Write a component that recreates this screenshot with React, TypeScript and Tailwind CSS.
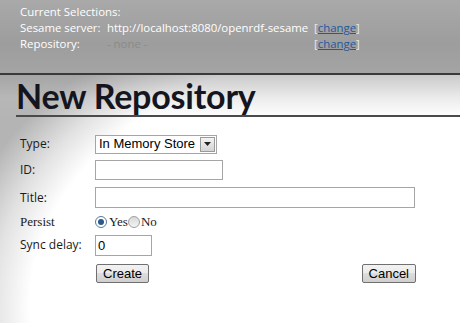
import React from "react";

const sans = { fontFamily: '"Open Sans", "DejaVu Sans", sans-serif' };

export default function App() {
  return (
    <div className="w-[460px] h-[323px] overflow-hidden bg-white" style={sans}>
      {/* header */}
      <div className="h-[73px] bg-[linear-gradient(180deg,#a9a9a9_0%,#9d9d9d_60%,#a4a4a4_100%)] pl-[20px] pt-[4px] text-[11.4px] leading-[16px] text-white">
        <div>Current Selections:</div>
        <div className="flex">
          <span className="w-[87px]">Sesame server:</span>
          <span className="w-[207px]">http://localhost:8080/openrdf-sesame</span>
          <span className="text-[#e8e8e8]">
            [<a className="text-[#1e5a9c] underline">change</a>]
          </span>
        </div>
        <div className="flex">
          <span className="w-[87px]">Repository:</span>
          <span className="w-[207px] text-[#8a8a8a]">- none -</span>
          <span className="text-[#e8e8e8]">
            [<a className="text-[#1e5a9c] underline">change</a>]
          </span>
        </div>
      </div>
      <div className="h-[2px] bg-[#3a3a3a]" />
      {/* lower area */}
      <div className="h-[248px] bg-[radial-gradient(ellipse_480px_340px_at_400px_230px,#ffffff_0%,#ffffff_77%,#e2e2e2_85%,#b4b4b4_95%)]">
        <div className="h-[42px] pl-[16px] bg-[linear-gradient(180deg,rgba(150,150,150,0.5)_0%,rgba(190,190,190,0.3)_55%,rgba(255,255,255,0)_100%)]">
          <div className="border-b-2 border-[#4a4a4a] h-[42px] flex items-end">
            <h1
              className="text-[34px] leading-[38px] font-bold text-[#151520] tracking-[-0.2px]"
              style={{ fontFamily: 'Lato, "Open Sans", sans-serif' }}
            >
              New Repository
            </h1>
          </div>
        </div>
        <div className="pl-[20px] pt-[17px] text-[12px] text-[#1a1a1a]">
          <div className="flex items-center h-[20px]">
            <span className="w-[75px]">Type:</span>
            <div
              className="w-[122px] h-[19px] bg-white border border-[#a5a5a5] flex items-center justify-between pl-[3px] pr-[1px] text-[13px] text-black"
              style={{ fontFamily: '"Liberation Sans", Arial, sans-serif' }}
            >
              <span>In Memory Store</span>
              <span className="w-[15px] h-[15px] bg-[linear-gradient(180deg,#f4f4f4,#d4d4d4)] border border-[#9a9a9a] flex items-center justify-center">
                <svg width="7" height="4" viewBox="0 0 7 4">
                  <path d="M0 0h7L3.5 4z" fill="#222" />
                </svg>
              </span>
            </div>
          </div>
          <div className="flex items-center h-[20px] mt-[6px]">
            <span className="w-[75px]">ID:</span>
            <div className="w-[128px] h-[20px] bg-white border border-[#a5a5a5]" />
          </div>
          <div className="flex items-center h-[21px] mt-[7px]">
            <span className="w-[75px]">Title:</span>
            <div className="w-[320px] h-[21px] bg-white border border-[#a5a5a5]" />
          </div>
          <div
            className="flex items-center h-[16px] mt-[6px] text-[13px]"
            style={{ fontFamily: '"Liberation Serif", "Times New Roman", serif' }}
          >
            <span className="w-[75px]">Persist</span>
            <span className="w-[12px] h-[12px] rounded-full border border-[#5a7a9a] bg-white flex items-center justify-center">
              <span className="w-[6px] h-[6px] rounded-full bg-[#2a5a8a]" />
            </span>
            <span className="ml-[2px]">Yes</span>
            <span className="w-[12px] h-[12px] rounded-full border border-[#a0a0a0] bg-[linear-gradient(180deg,#d8d8d8,#f4f4f4)]" />
            <span className="ml-[1px]">No</span>
          </div>
          <div className="flex items-center h-[20px] mt-[5px]">
            <span className="w-[75px]">Sync delay:</span>
            <div
              className="w-[57px] h-[21px] bg-white border border-[#a5a5a5] pl-[2px] text-[13px] text-black leading-[19px]"
              style={{ fontFamily: '"Liberation Sans", Arial, sans-serif' }}
            >
              0
            </div>
          </div>
          <div
            className="flex items-center mt-[9px] pl-[76px] w-[396px] justify-between text-[13px] text-black"
            style={{ fontFamily: '"Liberation Sans", Arial, sans-serif' }}
          >
            <button className="h-[19px] px-[6px] rounded-[2px] border border-[#707070] bg-[linear-gradient(180deg,#f2f2f2,#ebebeb_50%,#dddddd_50%,#cfcfcf)] leading-[16px]">
              Create
            </button>
            <button className="h-[19px] px-[6px] rounded-[2px] border border-[#707070] bg-[linear-gradient(180deg,#f2f2f2,#ebebeb_50%,#dddddd_50%,#cfcfcf)] leading-[16px]">
              Cancel
            </button>
          </div>
        </div>
      </div>
    </div>
  );
}
